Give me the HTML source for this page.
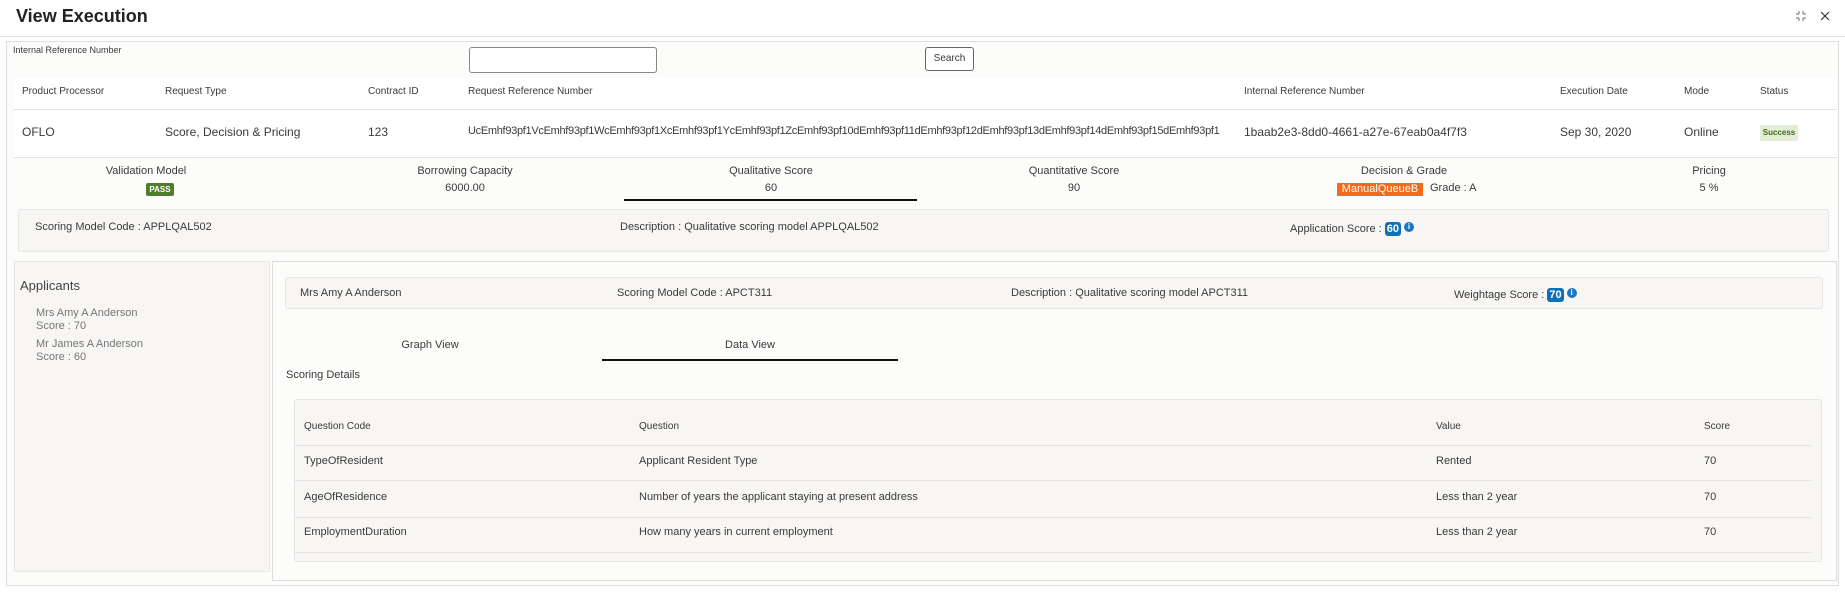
<!DOCTYPE html>
<html><head><meta charset="utf-8">
<style>
*{margin:0;padding:0;box-sizing:border-box}
body{width:1845px;height:602px;position:relative;overflow:hidden;background:#fff;font-family:"Liberation Sans",sans-serif;color:#3a3a3a;font-size:12px}
.a{position:absolute;white-space:nowrap}
.h{font-size:10px;color:#3a3a3a}
.v{font-size:12px;color:#3a3a3a}
.c{transform:translateX(-50%)}
.badge{position:absolute;color:#fff;font-weight:bold;text-align:center}
.info{display:inline-block;width:10px;height:10px;border-radius:50%;background:#1a78c2;color:#fff;font-size:8px;line-height:10px;text-align:center;vertical-align:top;margin-left:3px;font-weight:bold}
.blue{display:inline-block;background:#0c72b8;color:#fff;font-weight:bold;border-radius:3px;padding:1px 2px;font-size:11px}
.line{position:absolute;height:1px;background:#e2e2e2}
</style></head><body>
<div class="a" style="left:16px;top:6px;font-size:18px;font-weight:bold;color:#222">View Execution</div>
<svg class="a" style="left:1795px;top:10px" width="12" height="12" viewBox="0 0 12 12" fill="none" stroke="#666" stroke-width="1"><path d="M4 1v3M4 4H1M8 1v3M8 4h3M4 11V8M4 8H1M8 11V8M8 8h3"/></svg>
<svg class="a" style="left:1820px;top:11px" width="10" height="10" viewBox="0 0 10 10" stroke="#333" stroke-width="1.2"><path d="M1 1l8 8M9 1L1 9"/></svg>
<div class="line" style="left:0;top:36px;width:1845px;background:#ddd"></div>

<div class="a" style="left:6px;top:41px;width:1833px;height:545px;border:1px solid #ddd;background:#fcfcfb"></div>
<div class="a h" style="left:13px;top:45px;font-size:9px">Internal Reference Number</div>
<div class="a" style="left:469px;top:47px;width:188px;height:26px;border:1px solid #888;border-radius:3px;background:#fff"></div>
<div class="a" style="left:925px;top:47px;width:49px;height:24px;border:1px solid #666;border-radius:3px;background:#fff;font-size:10px;text-align:center;line-height:22px">Search</div>

<div class="a" style="left:14px;top:78px;width:1823px;height:79px;background:#fff"></div>
<div class="line" style="left:14px;top:109px;width:1823px"></div>
<div class="line" style="left:14px;top:157px;width:1823px"></div>
<div class="a h" style="left:22px;top:86px">Product Processor</div>
<div class="a h" style="left:165px;top:86px">Request Type</div>
<div class="a h" style="left:368px;top:86px">Contract ID</div>
<div class="a h" style="left:468px;top:86px">Request Reference Number</div>
<div class="a h" style="left:1244px;top:86px">Internal Reference Number</div>
<div class="a h" style="left:1560px;top:86px">Execution Date</div>
<div class="a h" style="left:1684px;top:86px">Mode</div>
<div class="a h" style="left:1760px;top:86px">Status</div>
<div class="a v" style="left:22px;top:125px">OFLO</div>
<div class="a v" style="left:165px;top:125px">Score, Decision &amp; Pricing</div>
<div class="a v" style="left:368px;top:125px">123</div>
<div class="a v" style="left:468px;top:125px;font-size:11px;letter-spacing:-0.3px">UcEmhf93pf1VcEmhf93pf1WcEmhf93pf1XcEmhf93pf1YcEmhf93pf1ZcEmhf93pf10dEmhf93pf11dEmhf93pf12dEmhf93pf13dEmhf93pf14dEmhf93pf15dEmhf93pf1</div>
<div class="a v" style="left:1244px;top:125px">1baab2e3-8dd0-4661-a27e-67eab0a4f7f3</div>
<div class="a v" style="left:1560px;top:125px">Sep 30, 2020</div>
<div class="a v" style="left:1684px;top:125px">Online</div>
<div class="a" style="left:1760px;top:125px;width:38px;height:16px;background:#e4edd6;border-radius:2px;font-size:8px;font-weight:bold;color:#3d6a1a;text-align:center;line-height:16px">Success</div>

<div class="a v c" style="left:146px;top:165px;font-size:11px">Validation Model</div>
<div class="badge" style="left:146px;top:183px;width:28px;height:13px;background:#4e7d2b;border-radius:2px;font-size:8px;line-height:13px">PASS</div>
<div class="a v c" style="left:465px;top:165px;font-size:11px">Borrowing Capacity</div>
<div class="a v c" style="left:465px;top:182px;font-size:11px">6000.00</div>
<div class="a v c" style="left:771px;top:165px;font-size:11px">Qualitative Score</div>
<div class="a v c" style="left:771px;top:182px;font-size:11px">60</div>
<div class="a" style="left:624px;top:199px;width:293px;height:2px;background:#111"></div>
<div class="a v c" style="left:1074px;top:165px;font-size:11px">Quantitative Score</div>
<div class="a v c" style="left:1074px;top:182px;font-size:11px">90</div>
<div class="a v c" style="left:1404px;top:165px;font-size:11px">Decision &amp; Grade</div>
<div class="a" style="left:1337px;top:183px;width:86px;height:13px;background:#f26b1d;color:#fff;font-size:11px;line-height:13px;text-align:center">ManualQueueB</div>
<div class="a v" style="left:1430px;top:182px;font-size:11px">Grade : A</div>
<div class="a v c" style="left:1709px;top:165px;font-size:11px">Pricing</div>
<div class="a v c" style="left:1709px;top:182px;font-size:11px">5 %</div>

<div class="a" style="left:18px;top:209px;width:1811px;height:43px;background:#f7f6f4;border:1px solid #e6e6e6;border-radius:3px"></div>
<div class="a v" style="left:35px;top:221px;font-size:11px">Scoring Model Code : APPLQAL502</div>
<div class="a v" style="left:620px;top:221px;font-size:11px">Description : Qualitative scoring model APPLQAL502</div>
<div class="a v" style="left:1290px;top:222px;font-size:11px">Application Score : <span class="blue">60</span><span class="info">i</span></div>

<div class="a" style="left:14px;top:261px;width:256px;height:311px;background:#f7f6f4;border:1px solid #e8e8e8"></div>
<div class="a" style="left:20px;top:278px;font-size:13px;color:#444">Applicants</div>
<div class="a" style="left:36px;top:307px;font-size:11px;color:#777">Mrs Amy A Anderson</div>
<div class="a" style="left:36px;top:320px;font-size:11px;color:#777">Score : 70</div>
<div class="a" style="left:36px;top:338px;font-size:11px;color:#777">Mr James A Anderson</div>
<div class="a" style="left:36px;top:351px;font-size:11px;color:#777">Score : 60</div>

<div class="a" style="left:272px;top:261px;width:1565px;height:320px;border:1px solid #ddd;background:#fcfcfb"></div>
<div class="a" style="left:285px;top:277px;width:1538px;height:32px;background:#f7f6f4;border:1px solid #e6e6e6;border-radius:3px"></div>
<div class="a v" style="left:300px;top:287px;font-size:11px">Mrs Amy A Anderson</div>
<div class="a v" style="left:617px;top:287px;font-size:11px">Scoring Model Code : APCT311</div>
<div class="a v" style="left:1011px;top:287px;font-size:11px">Description : Qualitative scoring model APCT311</div>
<div class="a v" style="left:1454px;top:288px;font-size:11px">Weightage Score : <span class="blue">70</span><span class="info">i</span></div>
<div class="a v c" style="left:430px;top:339px;font-size:11px">Graph View</div>
<div class="a v c" style="left:750px;top:339px;font-size:11px">Data View</div>
<div class="a" style="left:602px;top:359px;width:296px;height:2px;background:#111"></div>
<div class="a v" style="left:286px;top:369px;font-size:11px">Scoring Details</div>

<div class="a" style="left:294px;top:399px;width:1528px;height:163px;background:#f7f6f4;border:1px solid #e6e6e6;border-radius:3px"></div>
<div class="a h" style="left:304px;top:421px">Question Code</div>
<div class="a h" style="left:639px;top:421px">Question</div>
<div class="a h" style="left:1436px;top:421px">Value</div>
<div class="a h" style="left:1704px;top:421px">Score</div>
<div class="line" style="left:294px;top:445px;width:1517px"></div>
<div class="line" style="left:294px;top:480px;width:1517px"></div>
<div class="line" style="left:294px;top:517px;width:1517px"></div>
<div class="line" style="left:294px;top:552px;width:1517px"></div>
<div class="a v" style="left:304px;top:455px;font-size:11px">TypeOfResident</div>
<div class="a v" style="left:639px;top:455px;font-size:11px">Applicant Resident Type</div>
<div class="a v" style="left:1436px;top:455px;font-size:11px">Rented</div>
<div class="a v" style="left:1704px;top:455px;font-size:11px">70</div>
<div class="a v" style="left:304px;top:491px;font-size:11px">AgeOfResidence</div>
<div class="a v" style="left:639px;top:491px;font-size:11px">Number of years the applicant staying at present address</div>
<div class="a v" style="left:1436px;top:491px;font-size:11px">Less than 2 year</div>
<div class="a v" style="left:1704px;top:491px;font-size:11px">70</div>
<div class="a v" style="left:304px;top:526px;font-size:11px">EmploymentDuration</div>
<div class="a v" style="left:639px;top:526px;font-size:11px">How many years in current employment</div>
<div class="a v" style="left:1436px;top:526px;font-size:11px">Less than 2 year</div>
<div class="a v" style="left:1704px;top:526px;font-size:11px">70</div>
</body></html>
